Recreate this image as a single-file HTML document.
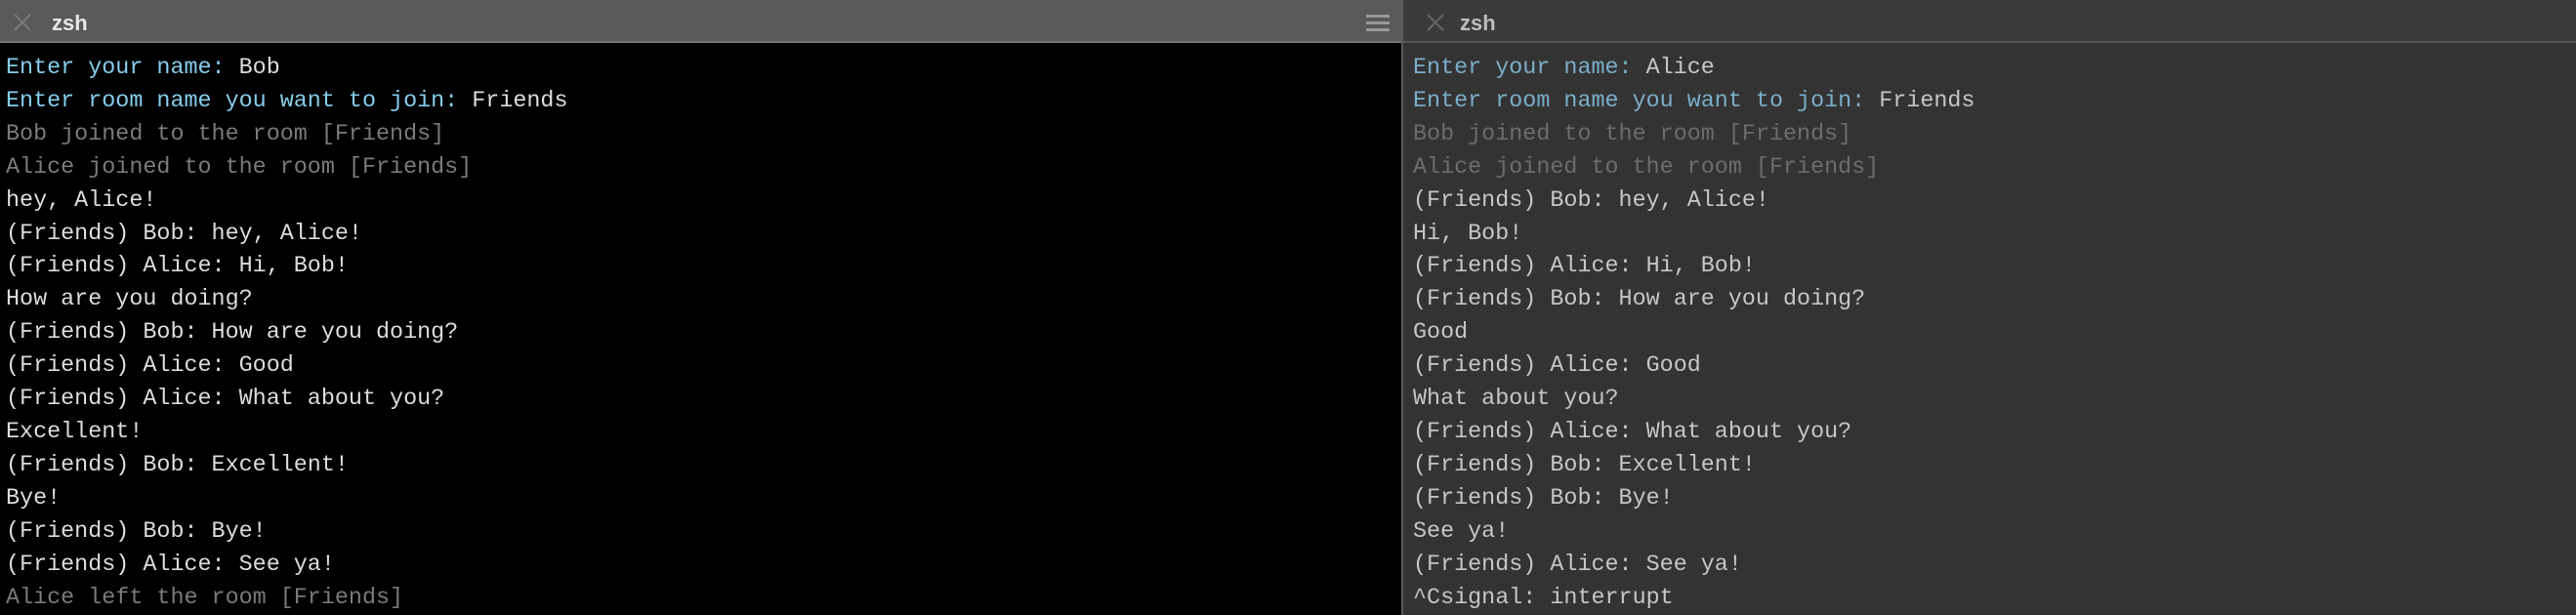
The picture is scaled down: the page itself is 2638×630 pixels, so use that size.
<!DOCTYPE html>
<html><head><meta charset="utf-8"><style>
*{margin:0;padding:0;box-sizing:border-box}
body{width:2638px;height:630px;overflow:hidden;background:#000;font-family:"Liberation Mono",monospace}
.pane{position:absolute;top:0;height:630px}
#L{left:0;width:1435px;background:#000}
#R{left:1437px;width:1201px;background:#333}
#div{position:absolute;left:1435px;top:0;width:2px;height:630px;background:#5a5a5a}
.tb{height:44px;position:relative;border-bottom:2px solid #777;font-family:"Liberation Sans",sans-serif;font-size:22px;font-weight:bold}
#L .tb{background:#595959;color:#e8e8e8}
#R .tb{background:#3a3a3a;color:#bdbdbd;border-bottom-color:#555}
.x{position:absolute;left:12px;top:12px;width:22px;height:22px}
.tb .t{position:absolute;left:53px;top:11px}
.menu{position:absolute;right:12px;top:15px;width:24px}
.menu i{display:block;height:3px;background:#999;margin-bottom:4px}
.txt{padding-left:6px;padding-top:10px;font-size:23.4px;line-height:33.9px;white-space:pre}
#L .txt{color:#dcdcdc}
#R .txt{color:#c6c6c6;padding-left:10px}
#L .b{color:#86cdec} #R .b{color:#79aecb}
#L .g{color:#7a7a7a} #R .g{color:#6c6c6c}
</style></head><body>
<div class="pane" id="L">
<div class="tb"><svg class="x" viewBox="0 0 22 22"><path d="M3 3L19 19M19 3L3 19" stroke="#7a7a7a" stroke-width="2"/></svg><span class="t">zsh</span><div class="menu"><i></i><i></i><i></i></div></div>
<div class="txt"><span class="b">Enter your name: </span>Bob
<span class="b">Enter room name you want to join: </span>Friends
<span class="g">Bob joined to the room [Friends]</span>
<span class="g">Alice joined to the room [Friends]</span>
hey, Alice!
(Friends) Bob: hey, Alice!
(Friends) Alice: Hi, Bob!
How are you doing?
(Friends) Bob: How are you doing?
(Friends) Alice: Good
(Friends) Alice: What about you?
Excellent!
(Friends) Bob: Excellent!
Bye!
(Friends) Bob: Bye!
(Friends) Alice: See ya!
<span class="g">Alice left the room [Friends]</span></div>
</div>
<div id="div"></div>
<div class="pane" id="R">
<div class="tb"><svg class="x" viewBox="0 0 22 22" style="left:22px"><path d="M3 3L19 19M19 3L3 19" stroke="#666" stroke-width="2"/></svg><span class="t" style="left:58px">zsh</span></div>
<div class="txt"><span class="b">Enter your name: </span>Alice
<span class="b">Enter room name you want to join: </span>Friends
<span class="g">Bob joined to the room [Friends]</span>
<span class="g">Alice joined to the room [Friends]</span>
(Friends) Bob: hey, Alice!
Hi, Bob!
(Friends) Alice: Hi, Bob!
(Friends) Bob: How are you doing?
Good
(Friends) Alice: Good
What about you?
(Friends) Alice: What about you?
(Friends) Bob: Excellent!
(Friends) Bob: Bye!
See ya!
(Friends) Alice: See ya!
^Csignal: interrupt</div>
</div>
</body></html>
